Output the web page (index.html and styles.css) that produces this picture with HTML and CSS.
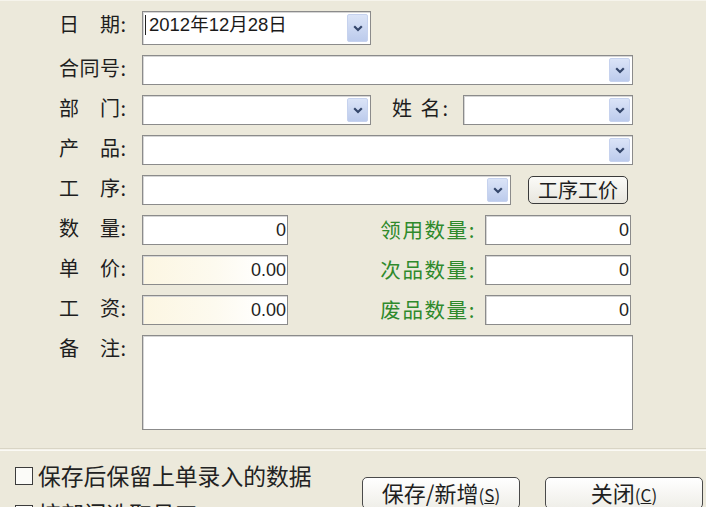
FILE: index.html
```html
<!DOCTYPE html>
<html lang="zh-CN">
<head>
<meta charset="utf-8">
<title>录入</title>
<link rel="stylesheet" href="styles.css">
</head>
<body>
<div class="dialog">
  <div class="form">
    <div class="row row-date">
      <span class="lbl">日　期:</span>
      <div class="field combo w-date">
        <span class="val"><span class="caret"></span>2012年12月28日</span>
        <span class="drop"><svg width="10" height="7" viewBox="0 0 10 7"><path d="M1.2 1.2 L5 5 L8.8 1.2" fill="none" stroke="#34466b" stroke-width="2.2"/></svg></span>
      </div>
    </div>
    <div class="row">
      <span class="lbl">合同号:</span>
      <div class="field combo grow">
        <span class="val"></span>
        <span class="drop"><svg width="10" height="7" viewBox="0 0 10 7"><path d="M1.2 1.2 L5 5 L8.8 1.2" fill="none" stroke="#34466b" stroke-width="2.2"/></svg></span>
      </div>
    </div>
    <div class="row">
      <span class="lbl">部　门:</span>
      <div class="field combo w-dept">
        <span class="val"></span>
        <span class="drop"><svg width="10" height="7" viewBox="0 0 10 7"><path d="M1.2 1.2 L5 5 L8.8 1.2" fill="none" stroke="#34466b" stroke-width="2.2"/></svg></span>
      </div>
      <span class="lbl lbl-name">姓 名:</span>
      <div class="field combo grow">
        <span class="val"></span>
        <span class="drop"><svg width="10" height="7" viewBox="0 0 10 7"><path d="M1.2 1.2 L5 5 L8.8 1.2" fill="none" stroke="#34466b" stroke-width="2.2"/></svg></span>
      </div>
    </div>
    <div class="row">
      <span class="lbl">产　品:</span>
      <div class="field combo grow">
        <span class="val"></span>
        <span class="drop"><svg width="10" height="7" viewBox="0 0 10 7"><path d="M1.2 1.2 L5 5 L8.8 1.2" fill="none" stroke="#34466b" stroke-width="2.2"/></svg></span>
      </div>
    </div>
    <div class="row">
      <span class="lbl">工　序:</span>
      <div class="field combo w-proc">
        <span class="val"></span>
        <span class="drop"><svg width="10" height="7" viewBox="0 0 10 7"><path d="M1.2 1.2 L5 5 L8.8 1.2" fill="none" stroke="#34466b" stroke-width="2.2"/></svg></span>
      </div>
      <button class="btn-small">工序工价</button>
    </div>
    <div class="row">
      <span class="lbl">数　量:</span>
      <div class="field num">0</div>
      <span class="glbl">领用数量:</span>
      <div class="field num right">0</div>
    </div>
    <div class="row">
      <span class="lbl">单　价:</span>
      <div class="field num cream">0.00</div>
      <span class="glbl">次品数量:</span>
      <div class="field num right">0</div>
    </div>
    <div class="row">
      <span class="lbl">工　资:</span>
      <div class="field num cream">0.00</div>
      <span class="glbl">废品数量:</span>
      <div class="field num right">0</div>
    </div>
    <div class="row row-memo">
      <span class="lbl">备　注:</span>
      <div class="field memo"></div>
    </div>
  </div>
  <div class="sep"></div>
  <div class="footer">
    <div class="checks">
      <div class="chk"><span class="box"></span>保存后保留上单录入的数据</div>
      <div class="chk"><span class="box"></span>按部门选取员工</div>
    </div>
    <button class="btn">保存/新增<span class="acc">(<u>S</u>)</span></button>
    <button class="btn btn-close">关闭<span class="acc">(<u>C</u>)</span></button>
  </div>
</div>
</body>
</html>
```

FILE: styles.css
```css
html, body {
  margin: 0;
  padding: 0;
  background: #ece9db;
}
body {
  width: 706px;
  height: 507px;
  overflow: hidden;
  font-family: "Liberation Sans", "Noto Sans CJK SC", sans-serif;
  color: #1e1e1e;
}
.dialog {
  border-top: 1px solid #f6f4ec;
}
.form {
  display: flex;
  flex-direction: column;
  gap: 10px;
  padding: 10px 0 0 59px;
  width: 574px;
}
.row {
  display: flex;
  align-items: center;
  height: 30px;
}
.row-date {
  height: 34px;
  align-items: stretch;
}
.row-memo {
  height: 95px;
  align-items: flex-start;
}
.lbl {
  width: 83px;
  flex: none;
  font-family: "Noto Sans CJK SC", sans-serif;
  font-size: 20px;
  letter-spacing: 0.5px;
  line-height: 22px;
  margin-top: -5px;
  white-space: pre;
}
.row-date .lbl {
  margin-top: 2px;
}
.row-memo .lbl {
  margin-top: 2px;
}
.lbl-name {
  width: auto;
  margin-left: 21px;
  margin-right: 13px;
  letter-spacing: 2px;
}
.glbl {
  margin-left: auto;
  margin-right: 9px;
  font-family: "Noto Sans CJK SC", sans-serif;
  font-size: 20.5px;
  letter-spacing: 1.6px;
  line-height: 22px;
  color: #2f8a2c;
  margin-top: -2px;
}
.field {
  box-sizing: border-box;
  height: 100%;
  background: #fff;
  border: 1px solid #8b8b8b;
  box-shadow: inset 1px 1px 0 #d6d6d6;
}
.combo {
  display: flex;
  justify-content: space-between;
  padding: 2px;
}
.grow {
  flex: 1;
}
.w-date { width: 229px; }
.w-dept { width: 229px; }
.w-proc { width: 369px; }
.val {
  display: flex;
  align-items: flex-start;
  font-size: 18.5px;
  line-height: 22px;
  color: #1a1a1a;
}
.caret {
  display: inline-block;
  width: 1px;
  height: 20px;
  background: #222;
  margin: 1px 3px 0 0;
}
.drop {
  flex: none;
  box-sizing: border-box;
  width: 21px;
  display: flex;
  align-items: center;
  justify-content: center;
  background: linear-gradient(#dbe4f7, #bccbec);
  border: 1px solid #c6d2ee;
  border-radius: 2px;
}
.num {
  width: 146px;
  flex: none;
  text-align: right;
  font-size: 18px;
  line-height: 28px;
  padding-right: 1px;
}
.num.right {
  margin-right: 2px;
}
.cream {
  background: linear-gradient(90deg, #fcf6e2 0%, #fdfaef 50%, #ffffff 85%);
}
.memo {
  flex: 1;
  height: 95px;
}
.btn-small {
  margin-left: 17px;
  width: 100px;
  height: 28px;
  padding: 0;
  font-family: "Noto Sans CJK SC", sans-serif;
  font-size: 20px;
  line-height: 24px;
  color: #1e1e1e;
  background: linear-gradient(#fbfbf8, #e8e6de);
  border: 1px solid #3a3a3a;
  border-radius: 5px;
}
.sep {
  margin-top: 18px;
  border-top: 1px solid #d9d5c5;
  border-bottom: 1px solid #fbfaf5;
  background: #f4f2ea;
  height: 1px;
}
.footer {
  display: grid;
  grid-template-columns: 347px 158px 183px;
  padding: 13px 0 0 15px;
  align-items: start;
}
.checks {
  display: flex;
  flex-direction: column;
  gap: 14px;
}
.chk {
  display: flex;
  align-items: center;
  font-family: "Noto Sans CJK SC", sans-serif;
  font-size: 22.8px;
  line-height: 24px;
  color: #222;
}
.box {
  box-sizing: border-box;
  width: 18px;
  height: 18px;
  margin-right: 5px;
  border: 1.5px solid #3c3c3c;
  background: #fbfbf8;
}
.btn {
  margin-top: 13px;
  width: 158px;
  height: 32px;
  padding: 0;
  font-family: "Noto Sans CJK SC", sans-serif;
  font-size: 22px;
  line-height: 28px;
  color: #1e1e1e;
  background: linear-gradient(#ffffff, #efeee8);
  border: 1px solid #4a4a4a;
  border-radius: 5px;
}
.btn-close {
  justify-self: end;
}
.acc {
  font-size: 17px;
}
```
